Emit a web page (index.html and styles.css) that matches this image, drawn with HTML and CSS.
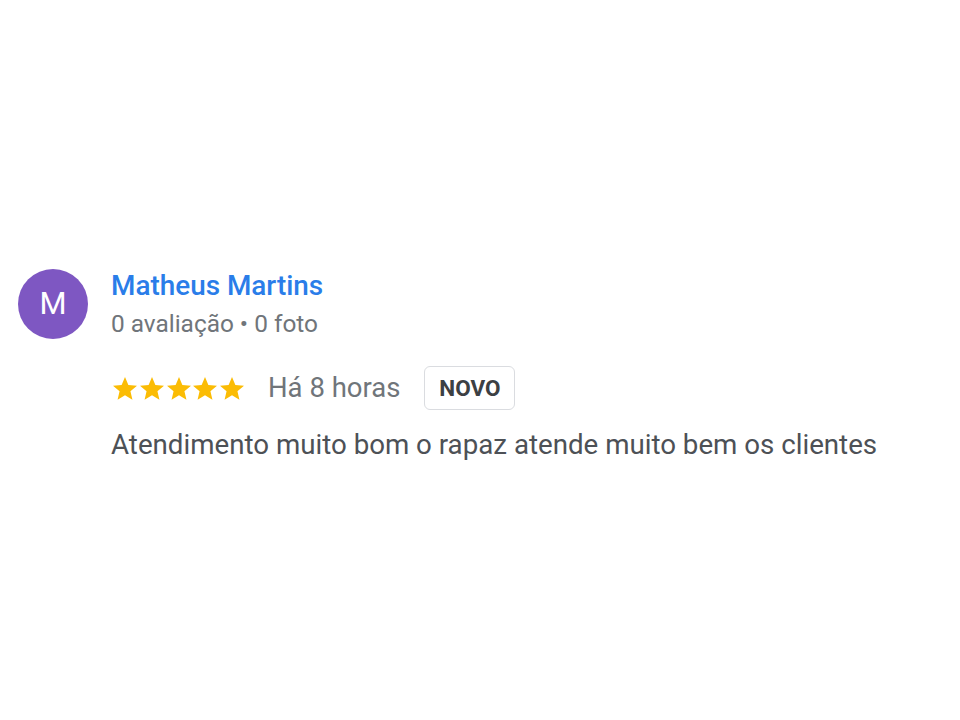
FILE: index.html
```html
<!DOCTYPE html>
<html lang="pt-BR">
<head>
<meta charset="utf-8">
<link rel="stylesheet" href="styles.css">
</head>
<body>
<div class="page">
  <div class="review">
    <div class="avatar">M</div>
    <div class="body">
      <div class="name">Matheus Martins</div>
      <div class="meta">0 avaliação • 0 foto</div>
      <div class="rating-row">
        <div class="stars">
          <svg viewBox="2 2 20 19.27" preserveAspectRatio="none" class="star"><path d="M12 17.27L18.18 21l-1.64-7.03L22 9.24l-7.19-.61L12 2 9.19 8.630 2 9.24l5.46 4.73L5.820 21z"/></svg>
          <svg viewBox="2 2 20 19.27" preserveAspectRatio="none" class="star"><path d="M12 17.27L18.18 21l-1.64-7.03L22 9.24l-7.19-.61L12 2 9.19 8.630 2 9.24l5.46 4.73L5.820 21z"/></svg>
          <svg viewBox="2 2 20 19.27" preserveAspectRatio="none" class="star"><path d="M12 17.27L18.18 21l-1.64-7.03L22 9.24l-7.19-.61L12 2 9.19 8.630 2 9.24l5.46 4.73L5.820 21z"/></svg>
          <svg viewBox="2 2 20 19.27" preserveAspectRatio="none" class="star"><path d="M12 17.27L18.18 21l-1.64-7.03L22 9.24l-7.19-.61L12 2 9.19 8.630 2 9.24l5.46 4.73L5.820 21z"/></svg>
          <svg viewBox="2 2 20 19.27" preserveAspectRatio="none" class="star"><path d="M12 17.27L18.18 21l-1.64-7.03L22 9.24l-7.19-.61L12 2 9.19 8.630 2 9.24l5.46 4.73L5.820 21z"/></svg>
        </div>
        <span class="time">Há 8 horas</span>
        <span class="badge">NOVO</span>
      </div>
      <p class="text">Atendimento muito bom o rapaz atende muito bem os clientes</p>
    </div>
  </div>
</div>
</body>
</html>
```
FILE: styles.css
```css
html, body {
  margin: 0;
  padding: 0;
  background: #ffffff;
}
.page {
  width: 960px;
  height: 720px;
  box-sizing: border-box;
  padding: 269px 0 0 18px;
  font-family: Roboto, "Noto Sans", sans-serif;
}
.review {
  display: flex;
  align-items: flex-start;
  gap: 23px;
}
.avatar {
  width: 70px;
  height: 70px;
  border-radius: 50%;
  background: #7e57c2;
  color: #ffffff;
  font-size: 31px;
  line-height: 70px;
  text-align: center;
  flex: none;
}
.body {
  display: flex;
  flex-direction: column;
}
.name {
  margin-top: 1px;
  font-size: 27.9px;
  line-height: 32px;
  font-weight: 500;
  color: #2a7de9;
}
.meta {
  margin-top: 8px;
  font-size: 24.4px;
  line-height: 28px;
  color: #70757a;
}
.rating-row {
  display: flex;
  align-items: center;
  margin-top: 28px;
}
.stars {
  display: flex;
  gap: 2.75px;
  margin-left: 2px;
}
.star {
  width: 24px;
  height: 23px;
  fill: #fbbc04;
}
.time {
  margin-left: 24px;
  font-size: 27.5px;
  line-height: 32px;
  color: #70757a;
}
.badge {
  margin-left: 24px;
  box-sizing: border-box;
  width: 91px;
  height: 44px;
  border: 1px solid #dadce0;
  border-radius: 6px;
  text-align: center;
  font-size: 22.5px;
  line-height: 42px;
  font-weight: 700;
  color: #3c4043;
}
.text {
  margin: 17px 0 0;
  font-size: 27.7px;
  line-height: 36px;
  color: #4d5156;
}
```
